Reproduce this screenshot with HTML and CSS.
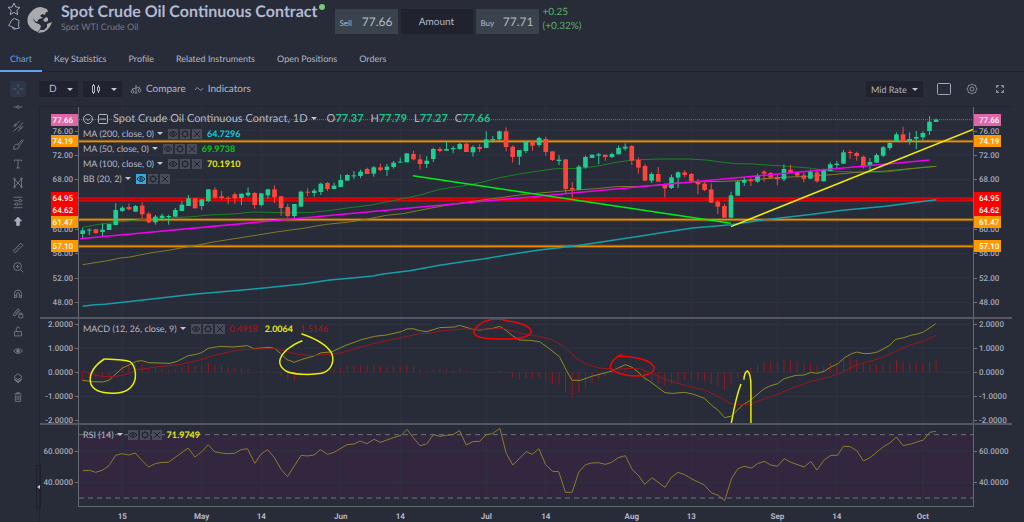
FILE: index.html
```
<!DOCTYPE html>
<html lang="en">
  <head>
    <meta charset="UTF-8" />
    <meta name="viewport" content="width=device-width, initial-scale=1.0" />
    <title>Spot Crude Oil Continuous Contract</title>
    <link rel="stylesheet" href="styles.css">
  </head>
  <body>
    <!-- Icons shared by the legend rows -->
    <svg class="sprite" aria-hidden="true">
      <symbol id="i-eye" viewBox="0 0 10 10">
        <path d="M1 5Q5 0 9 5Q5 10 1 5Z" /><circle cx="5" cy="5" r="1.2" />
      </symbol>
      <symbol id="i-gear" viewBox="0 0 10 10">
        <circle cx="5" cy="5" r="2.6" />
        <path d="M5 1v1.4M5 7.6V9M1 5h1.4M7.6 5H9M2.2 2.2l1 1M6.8 6.8l1 1M2.2 7.8l1-1M6.8 3.2l1-1" />
      </symbol>
      <symbol id="i-close" viewBox="0 0 10 10">
        <path d="M2 2l6 6M8 2l-6 6" />
      </symbol>
    </svg>

    <!-- Header -->
    <header class="header">
      <div class="marks">
        <button class="icon-btn" aria-label="Favourite">
          <svg width="14" height="14" viewBox="0 0 14 14"><path d="M7 1l1.800 4 4.200.4-3.200 2.900 1 4.300L7 10.400l-3.800 2.200 1-4.300L1 5.400l4.200-.4z" /></svg>
        </button>
        <button class="icon-btn" aria-label="Alert">
          <svg width="14" height="14" viewBox="0 0 14 14"><path d="M7.500 1.500L12 3.500l-.5 6 1 1.500-3.500.8-7.500-3.500C3.500 7.500 3 3 7.500 1.500zM5.500 10.500q.5 2.500 3 1.500" /></svg>
        </button>
      </div>
      <svg class="globe" width="26" height="26" viewBox="0 0 26 26">
        <path d="M4 5Q8 0 14 0L20 2L21 5L19 5L18 8L16 7L14 8L13 9L16 11L12 12L10 15L8 14L6 11L7 14L9 16L12 17L14 19L13 22L11 25Q4 23 1 17Q-1 10 4 5Z" />
        <path d="M16 13L19 10L21 11L21 14L18 15Z" />
        <path d="M20 17L25 15Q23 22 17 25L11 26L13 23L17 23L20 20Z" />
      </svg>
      <div class="names">
        <h1>Spot Crude Oil Continuous Contract<span class="live"></span></h1>
        <p>Spot WTI Crude Oil</p>
      </div>
      <div class="deal">
        <button class="rate"><small>Sell</small>77.66</button>
        <input class="amount" type="text" placeholder="Amount" aria-label="Amount" />
        <button class="rate"><small>Buy</small>77.71</button>
      </div>
      <div class="change">+0.25<br />(+0.32%)</div>
    </header>

    <nav class="tabs">
      <a href="#" class="active">Chart</a>
      <a href="#">Key Statistics</a>
      <a href="#">Profile</a>
      <a href="#">Related Instruments</a>
      <a href="#">Open Positions</a>
      <a href="#">Orders</a>
    </nav>

    <div class="workspace">
      <!-- Drawing tools -->
      <aside class="tools">
        <button class="tool selected" aria-label="Crosshair"><svg viewBox="0 0 16 16"><path d="M8 2v4M8 10v4M2 8h4M10 8h4" /></svg></button>
        <div class="tool-group">
          <button class="tool" aria-label="Horizontal line"><svg viewBox="0 0 16 16"><path d="M3 8h3M10 8h3" /><circle cx="8" cy="8" r="1.500" /></svg></button>
          <button class="tool" aria-label="Channel"><svg viewBox="0 0 16 16"><path d="M3 9l7-7M3 14L14 4M8 14l6-6" /><circle cx="5" cy="7" r="1" /><circle cx="11" cy="10" r="1" /></svg></button>
          <button class="tool" aria-label="Brush"><svg viewBox="0 0 16 16"><path d="M3 13q0-6 4-6 4 1 2 4-2 2-6 2zM8 7l5-5 1 1-4 5" /></svg></button>
          <button class="tool" aria-label="Text"><svg viewBox="0 0 16 16"><path d="M4 5V3.500h8V5M8 3.500v9M6 12.500h4" /></svg></button>
          <button class="tool" aria-label="Pattern"><svg viewBox="0 0 16 16"><path d="M4 12V4l4 4 4-5v9L8 8z" /><circle cx="4" cy="3.500" r="1" /><circle cx="12" cy="3" r="1" /><circle cx="4" cy="12.500" r="1" /><circle cx="12" cy="12.500" r="1" /></svg></button>
          <button class="tool" aria-label="Levels"><svg viewBox="0 0 16 16"><path d="M3 2.500h10M3 6.500h6M12 6.500h1M3 10.500h2M8 10.500h5M3 14.500h10" /><circle cx="10.500" cy="6.500" r="1.500" /><circle cx="6.500" cy="10.500" r="1.500" /></svg></button>
          <button class="tool solid" aria-label="Arrow"><svg viewBox="0 0 16 16"><path d="M8 3.500l4 4.500H9.500v5h-3V8H4z" /></svg></button>
        </div>
        <div class="tool-group">
          <button class="tool" aria-label="Measure"><svg viewBox="0 0 16 16"><path d="M2.500 11L11 2.500 13.500 5 5 13.500zM5 10l1 1M7 8l1 1M9 6l1 1" /></svg></button>
          <button class="tool" aria-label="Zoom in"><svg viewBox="0 0 16 16"><circle cx="7.500" cy="7.500" r="4.500" /><path d="M11 11l3 3M5.500 7.500h4M7.500 5.500v4" /></svg></button>
        </div>
        <div class="tool-group">
          <button class="tool" aria-label="Magnet"><svg viewBox="0 0 16 16"><path d="M4 12V7.500a4 4 0 018 0V12H9.500V8a1.500 1.500 0 00-3 0v4zM4 10h2.500M9.500 10H12" /></svg></button>
          <button class="tool" aria-label="Lock drawing"><svg viewBox="0 0 16 16"><path d="M3 9l5-6 2 2-5 6H3zM5 9l4-4" /><path d="M9 9.500h4.500v4H9zM10 9.500V8h2.500v1.500" /></svg></button>
          <button class="tool" aria-label="Unlock all"><svg viewBox="0 0 16 16"><path d="M4 7.500h8v5H4zM6 7.500V5a2 2 0 014-1M8 9.500v1" /></svg></button>
          <button class="tool" aria-label="Show drawings"><svg viewBox="0 0 16 16"><path d="M3 8Q8 2.500 13 8 8 13.500 3 8z" /><circle class="dot" cx="8" cy="8" r="1.500" /></svg></button>
        </div>
        <div class="tool-group">
          <button class="tool" aria-label="Layers"><svg viewBox="0 0 16 16"><path d="M8 3l4.500 3.500L8 10 3.500 6.500z" /><path class="dot" d="M4 9l4 3 4-3v1l-4 3.500L4 10z" /></svg></button>
          <button class="tool" aria-label="Delete"><svg viewBox="0 0 16 16"><path d="M4 4.500h8M6.500 4.500V3h3v1.500M5 6v7h6V6M7 6.500v5M9 6.500v5" /></svg></button>
        </div>
      </aside>

      <main class="main">
        <div class="toolbar">
          <span class="picker"><select aria-label="Interval"><option>D</option></select></span>
          <button class="picker chart-type" aria-label="Chart type">
            <svg width="10" height="12" viewBox="0 0 10 12"><path d="M1.500 2.500h2v7h-2zM2.500 1v1.500M2.500 9.500V11M6.500 4h2v4h-2zM7.500 2v2M7.500 8v2" /></svg>
          </button>
          <button class="action">
            <svg width="12" height="10" viewBox="0 0 12 10"><path d="M6 1v8M2 5l8-2M1 8q1.500 2 3 0L2.500 5zM8 7q1.500 2 3 0L9.500 4zM4.500 9h3" /></svg>Compare
          </button>
          <button class="action">
            <svg width="10" height="10" viewBox="0 0 10 10"><path d="M1 6q2-4 4-1t4-1" /></svg>Indicators
          </button>
          <div class="toolbar-end">
            <span class="picker"><select aria-label="Rate"><option>Mid Rate</option></select></span>
            <button class="icon-btn" aria-label="Layout"><svg width="14" height="14" viewBox="0 0 14 14"><rect x="0.500" y="1.500" width="13" height="11" rx="1" /></svg></button>
            <button class="icon-btn dim" aria-label="Settings"><svg width="14" height="14" viewBox="0 0 14 14"><path d="M5.500 3L7 2l1.500 1 2 .3.5 2L12 7l-1 1.700-.5 2-2 .3L7 12l-1.500-1-2-.3-.5-2L2 7l1-1.700.5-2z" /><circle cx="7" cy="7" r="2" /></svg></button>
            <button class="icon-btn dim" aria-label="Full screen"><svg width="14" height="14" viewBox="0 0 14 14"><path d="M3.500 6V3.500H6M3.500 3.500l2 2M8 3.500h2.500V6M10.500 3.500l-2 2M3.500 8v2.500H6M3.500 10.500l2-2M10.500 8v2.500H8M10.500 10.500l-2-2" /></svg></button>
          </div>
        </div>

        <div class="chart">
          <!-- Price -->
          <section class="pane price-pane">
            <svg class="axis" data-pane="price" data-side="left"></svg>
            <div class="plot">
              <svg id="price" viewBox="0 21 2685 630" preserveAspectRatio="none"></svg>
              <div class="legend">
                <div class="row title">
                  <svg width="10" height="10" viewBox="0 0 10 10"><circle cx="5" cy="5" r="4.500" /><path d="M3 4.500l2 2 2-2" /></svg>
                  <svg width="10" height="10" viewBox="0 0 10 10"><rect x="0.500" y="0.500" width="9" height="9" rx="1" /><path d="M2 5h6" /></svg>
                  <span class="caret">Spot Crude Oil Continuous Contract, 1D</span>
                  <span class="ohlc">O<b>77.37</b></span>
                  <span class="ohlc">H<b>77.79</b></span>
                  <span class="ohlc">L<b>77.27</b></span>
                  <span class="ohlc">C<b>77.66</b></span>
                </div>
                <div class="row" data-study><span class="caret">MA (200, close, 0)</span><b class="cyan">64.7296</b></div>
                <div class="row" data-study><span class="caret">MA (50, close, 0)</span><b class="green">69.9738</b></div>
                <div class="row" data-study><span class="caret">MA (100, close, 0)</span><b class="yellow">70.1910</b></div>
                <div class="row hidden-study" data-study><span class="caret">BB (20, 2)</span></div>
              </div>
            </div>
            <svg class="axis" data-pane="price" data-side="right"></svg>
          </section>

          <!-- MACD -->
          <section class="pane macd-pane">
            <svg class="axis" data-pane="macd" data-side="left"></svg>
            <div class="plot">
              <svg id="macd" viewBox="0 27 2685 312" preserveAspectRatio="none"></svg>
              <div class="legend">
                <div class="row" data-study><span class="caret">MACD (12, 26, close, 9)</span><span class="red">0.4918</span><b class="yellow">2.0064</b><span class="red">1.5146</span></div>
              </div>
            </div>
            <svg class="axis" data-pane="macd" data-side="right"></svg>
          </section>

          <!-- RSI -->
          <section class="pane rsi-pane">
            <svg class="axis" data-pane="rsi" data-side="left"></svg>
            <div class="plot">
              <svg id="rsi" viewBox="0 345 2685 243" preserveAspectRatio="none"></svg>
              <div class="legend">
                <div class="row" data-study><span class="caret">RSI (14)</span><b class="yellow">71.9749</b></div>
              </div>
            </div>
            <svg class="axis" data-pane="rsi" data-side="right"></svg>
          </section>

          <div class="time-axis"><div id="dates"></div></div>
          <button class="collapse" aria-label="Collapse panel"></button>
        </div>
      </main>
    </div>

    <script src="chart.js"></script>
  </body>
</html>
```

FILE: styles.css
```
* {
  box-sizing: border-box;
  margin: 0;
  padding: 0;
}

body {
  font-family: Lato, "Open Sans", sans-serif;
  font-size: 10px;
  text-rendering: geometricPrecision;
  background-color: #282b38;
  color: #b4b8c6;
  min-height: 100vh;
  overflow-x: hidden;
}

button,
input,
select {
  font: inherit;
  color: inherit;
  text-rendering: inherit;
  background: none;
  border: none;
  cursor: pointer;
}

svg {
  display: block;
  fill: none;
  stroke: currentColor;
}

.sprite {
  position: absolute;
  width: 0;
  height: 0;
}

/* Header */
.header {
  display: flex;
  align-items: flex-start;
  height: 46px;
  padding-left: 7px;
}

.marks {
  display: flex;
  flex-direction: column;
  gap: 1px;
  padding-top: 2px;
  margin-right: 6px;
}

.icon-btn {
  display: block;
  color: #a0a9bd;
}

.icon-btn.dim {
  color: #8a8d99;
}

.globe {
  margin-top: 7px;
  fill: #a9aaad;
  stroke: none;
}

.names {
  padding: 1px 0 0 8px;
}

h1 {
  display: flex;
  font-size: 16px;
  line-height: 22px;
  font-weight: 700;
  color: #b2b9d2;
}

.names p {
  font-size: 9px;
  line-height: 8px;
  color: #777a84;
}

.live {
  width: 6px;
  height: 6px;
  margin: 3px 0 0 1px;
  border-radius: 50%;
  background-color: #72c979;
}

.deal {
  display: flex;
  gap: 3px;
  margin: 9px 0 0 10px;
}

.rate {
  display: flex;
  align-items: baseline;
  justify-content: space-between;
  width: 63px;
  height: 25px;
  padding: 5px;
  background-color: #3a424b;
  font-size: 12px;
  line-height: 16px;
}

.rate small {
  font-size: 8px;
}

.amount {
  width: 72px;
  background-color: #20222e;
  text-align: center;
}

.amount::placeholder {
  color: #b4b8c6;
  opacity: 1;
}

.change {
  margin: 5px 0 0 4px;
  line-height: 14px;
  color: #58b368;
}

/* Tabs */
.tabs {
  display: flex;
  gap: 2px;
  height: 26px;
  border-bottom: 1px solid #1f212c;
  font-size: 9px;
}

.tabs a {
  padding: 5px 10px;
  height: 26px;
  line-height: 15px;
  color: inherit;
  text-decoration: none;
}

.tabs a.active {
  color: #5ea6ec;
  border-bottom: 2px solid #5ea6ec;
}

/* Left tools */
.workspace {
  display: flex;
}

.tools {
  width: 36px;
  padding: 9px 0 0 10px;
  display: flex;
  flex-direction: column;
  gap: 8px;
}

.tool {
  display: flex;
  align-items: center;
  width: 16px;
  height: 19px;
  color: #777b87;
}

.tool svg {
  width: 16px;
  height: 14px;
}

.tool.selected {
  height: 16px;
  margin-bottom: -8px;
  background-color: #303548;
  border-radius: 2px;
  color: #2f7488;
}

.tool.solid {
  color: #a7aebf;
}

.tool.solid svg,
.dot {
  fill: currentColor;
}

/* Toolbar */
.main {
  flex: 1;
  min-width: 0;
  padding: 0 12px 0 3px;
}

.toolbar {
  display: flex;
  align-items: center;
  height: 34px;
  gap: 5px;
}

.picker {
  display: flex;
  align-items: center;
  height: 16px;
  background-color: #20222e;
}

.picker select {
  appearance: none;
  padding: 0 5px 0 10px;
}

.toolbar-end .picker select {
  padding: 0 0 0 5px;
  font-size: 9px;
}

.chart-type {
  gap: 5px;
  padding-left: 8px;
}

.picker::after,
.caret::after {
  content: "";
  border: 3px solid transparent;
  border-top-color: #c3c7d2;
  border-bottom: 0;
}

.picker::after {
  margin: 0 5px;
}

.action {
  display: flex;
  align-items: center;
  gap: 4px;
  margin-left: 3px;
}

.action svg {
  color: #858996;
}

.toolbar-end {
  display: flex;
  align-items: center;
  gap: 14px;
  margin-left: auto;
  padding-right: 5px;
}

/* Chart */
.chart {
  position: relative;
  border-top: 1px solid #222430;
  border-left: 1px solid #222430;
}

.pane {
  display: grid;
  grid-template: 100% / 38px 1fr 38px;
}

.price-pane {
  height: 210px;
}

.macd-pane {
  height: 106px;
}

.rsi-pane {
  height: 84px;
}

.macd-pane,
.rsi-pane {
  border-top: 2px solid #555862;
}

.plot {
  position: relative;
  overflow: hidden;
  border: solid #666973;
  border-width: 0 1px;
}

.rsi-pane .plot {
  border-bottom: 1px solid #666973;
}

.plot > svg {
  width: 100%;
  height: 100%;
}

.plot > svg * {
  vector-effect: non-scaling-stroke;
}

.axis {
  width: 38px;
  height: 100%;
  overflow: visible;
  font-family: Roboto, Arial, sans-serif;
  font-size: 8px;
  font-weight: 500;
}

.axis text {
  fill: #a3a8b6;
  stroke: none;
}

.axis .tag {
  stroke: none;
}

.axis .tag-text {
  fill: #fff;
}

.axis line {
  stroke: #70737d;
}

.grid {
  stroke: #2f3241;
}

.up {
  stroke: #20cd91;
  fill: #20cd91;
}

.down {
  stroke: #ff443b;
  fill: #ff443b;
}

.body {
  stroke: none;
}

.last {
  stroke: #a05a86;
  stroke-dasharray: 1 1;
}

.halo {
  stroke-width: 3;
  opacity: 0.45;
}

.orange {
  stroke: #ff9800;
}

.level-red {
  stroke: #e60208;
  stroke-width: 2;
  opacity: 0.9;
}

.ma50 {
  stroke: #1c8126;
}

.ma100 {
  stroke: #7f7c2a;
}

.ma200 {
  stroke: #149fa8;
  stroke-width: 1.5;
}

.trend-pink {
  stroke: #f000f0;
  stroke-width: 1.5;
}

.trend-green {
  stroke: #00ee10;
  stroke-width: 1.5;
}

.trend-yellow,
.mark-yellow {
  stroke: #eeee05;
  stroke-width: 1.5;
}

.mark-red {
  stroke: #f00505;
  stroke-width: 1.5;
}

.macd-line {
  stroke: #8d8d26;
}

.signal-line,
.histogram {
  stroke: #991820;
}

.rsi-line {
  stroke: #8d7c2c;
}

.band {
  fill: #33263f;
  stroke: none;
}

.band-edge {
  stroke: #74707e;
  stroke-dasharray: 5 4;
}

/* Legends */
.legend {
  position: absolute;
  top: 4px;
  left: 4px;
  font-size: 9px;
}

.macd-pane .legend,
.rsi-pane .legend {
  top: 2px;
}

.row {
  display: flex;
  align-items: center;
  gap: 5px;
  height: 15px;
  line-height: 15px;
  white-space: nowrap;
}

.row.title {
  font-size: 11px;
}

.caret {
  display: flex;
  align-items: center;
  gap: 3px;
}

.title .caret {
  margin-right: 5px;
}

.ohlc {
  margin-right: 2px;
}

.ohlc b {
  color: #20c08c;
}

.row-tools {
  display: flex;
  gap: 2px;
}

.row-tools button {
  width: 10px;
  height: 10px;
  background-color: #484b58;
  color: #20232e;
}

.row-tools svg {
  width: 10px;
  height: 10px;
}

.hidden-study .row-tools button:first-child {
  background-color: #38a7dc;
}

.cyan {
  color: #09cfdc;
}

.green {
  color: #0fc41b;
}

.yellow {
  color: #e8e815;
}

.red {
  color: #ba1018;
  margin-right: 2px;
}

b + .red {
  margin-left: 2px;
}

/* Dates */
.time-axis {
  height: 15px;
  padding: 0 39px;
  font: 700 8px Roboto, Arial, sans-serif;
}

#dates {
  position: relative;
}

#dates span {
  position: absolute;
  top: 5px;
  transform: translateX(-50%);
}

.collapse {
  position: absolute;
  bottom: 14px;
  left: -4px;
  width: 5px;
  height: 43px;
  border: 1px solid #1d1f2a;
}

.collapse::after {
  content: "";
  display: block;
  border: 2px solid transparent;
  border-right: 3px solid #c3c7d2;
  border-left: 0;
}
```

FILE: chart.js
```
const STEP = 19.87;
const FIRST = 11;
const WIDTH = 2685;

// high, body top, body bottom, low, up
const candles = [
  [383,391,402,416,1],[385,389,392,405,1],[386,388,399,402,0],[370,389,396,408,1],[372,372,390,390,1],
  [310,330,375,376,1],[318,323,333,336,1],[310,321,328,331,0],[315,318,335,335,1],[306,317,343,355,0],
  [336,341,367,370,0],[345,350,367,374,1],[341,347,354,362,1],[344,348,350,374,1],[324,330,350,350,1],
  [303,314,333,333,1],[285,295,318,318,1],[295,295,325,325,0],[298,298,318,330,1],[268,268,303,307,1],
  [262,269,293,295,0],[273,289,294,300,0],[288,294,297,312,0],[278,283,295,312,0],[281,281,294,315,1],
  [262,278,286,291,1],[276,279,315,326,0],[280,280,315,320,1],[266,268,286,296,1],[256,268,292,309,0],
  [288,289,324,348,0],[312,321,348,353,0],[312,312,348,357,1],[272,275,320,320,1],[265,275,278,288,0],
  [266,272,279,290,1],[248,251,276,285,1],[246,249,267,273,0],[248,257,267,267,1],[224,240,261,261,1],
  [222,225,242,242,1],[213,226,228,237,1],[209,215,228,234,1],[203,207,222,222,0],[198,202,221,230,1],
  [191,202,210,214,0],[192,200,210,228,1],[183,188,201,206,1],[173,185,188,188,1],[160,160,187,187,1],
  [152,162,178,181,0],[163,178,192,208,0],[168,182,192,204,1],[143,147,177,186,1],[141,147,153,157,0],
  [125,147,152,152,1],[138,144,148,160,1],[128,132,147,149,1],[128,131,156,156,0],[136,141,157,170,1],
  [133,141,147,156,0],[94,118,144,144,1],[108,117,120,128,1],[92,94,118,125,1],[82,94,141,154,0],
  [136,140,171,188,0],[150,150,170,195,1],[123,126,153,160,1],[125,125,137,152,0],[110,114,135,140,1],
  [110,117,156,167,0],[154,154,180,183,0],[166,179,183,195,1],[177,178,267,280,0],[247,264,269,292,0],
  [195,200,270,270,1],[167,171,202,206,1],[164,164,174,174,1],[159,163,167,193,1],[164,164,171,182,0],
  [158,162,171,174,1],[137,144,163,163,1],[130,140,146,152,1],[135,138,182,195,0],[172,180,203,221,0],
  [191,198,242,242,0],[217,222,242,249,1],[201,222,245,245,0],[250,253,265,292,0],[224,232,264,267,1],
  [214,217,233,264,1],[211,217,225,232,0],[219,222,243,248,0],[237,243,253,283,0],[246,251,270,273,0],
  [250,268,308,308,0],[300,305,320,342,0],[311,318,353,353,0],[275,286,353,353,1],[243,245,287,287,1],
  [230,240,248,258,1],[233,240,244,258,0],[221,226,245,248,1],[210,215,221,245,0],[216,219,233,236,0],
  [221,231,238,256,0],[193,207,238,243,1],[194,209,219,219,0],[213,216,227,233,0],[217,226,236,247,0],
  [209,215,236,236,1],[209,217,244,248,0],[206,210,244,244,1],[187,193,213,213,1],[183,191,195,204,1],
  [150,157,191,191,1],[150,156,158,176,0],[155,159,168,182,0],[167,170,198,205,0],[174,186,195,210,1],
  [160,165,188,188,1],[138,142,167,171,1],[125,129,144,150,1],[97,103,124,124,1],[80,103,124,124,0],
  [97,117,124,134,1],[93,111,116,147,1],[94,99,112,122,1],[49,65,93,105,1],[56,59,66,66,1],
];

// shift a list of [x, y] points along the plot
const from = (dx, points) => points.map(([x, y]) => [x + dx, y]);

const ma50 = [
  ...from(-27, [[38,382],[80,374],[130,368],[200,360],[255,356],[370,350],[415,345],[490,342],[550,336],[640,338],[720,338],[800,329]]),
  ...from(813, [[0,323],[60,316],[155,297],[215,284],[270,268],[350,256],[400,246],[450,233],[510,222],[560,214],[620,206],[690,205],[740,199],[800,187],[850,180]]),
  ...from(1683, [[0,179],[60,177],[150,177],[200,180],[250,187],[290,191],[340,192],[430,198],[510,204],[570,213],[650,216],[740,216],[800,209],[850,202],[892,199]]),
];
const ma100 = [
  ...from(-27, [[38,494],[120,481],[150,474],[180,471],[240,459],[300,450],[380,436],[430,426],[520,412],[620,396],[700,385],[770,373]]),
  ...from(813, [[0,366],[60,356],[110,346],[160,341],[240,325],[300,314],[370,304],[430,296],[510,285],[570,279],[640,273],[740,266],[800,260]]),
  ...from(1683, [[0,259],[60,255],[120,248],[200,245],[260,244],[340,239],[430,232],[520,228],[580,224],[640,218],[740,213],[800,207],[892,199]]),
];
const ma200 = [
  ...from(-27, [[38,619],[75,614],[105,613],[200,602],[370,583],[520,570],[700,552],[780,540]]),
  ...from(813, [[0,535],[70,528],[100,522],[180,512],[270,496],[350,484],[400,477],[490,462],[570,450],[680,437],[750,427]]),
  ...from(1683, [[0,409],[95,394],[160,384],[275,374],[370,360],[520,343],[610,331],[740,319],[820,308],[892,299]]),
];
const macd = [
  ...from(-27, [[38,211],[70,215],[100,216],[118,210],[156,175],[200,154],[216,152],[236,158],[300,160],[322,154],[355,137],[380,133],[395,128],[415,115],[450,109],[490,111],[533,107],[552,116],[600,112],[615,116],[632,130],[652,149],[673,157],[700,147],[730,139],[755,128],[785,126],[830,105]]),
  ...from(813, [[0,102],[35,89],[75,79],[110,75],[155,65],[172,57],[190,56],[210,62],[232,65],[270,53],[315,51],[330,46],[370,58],[390,60],[430,55],[451,49],[470,62],[490,78],[510,90],[540,91],[570,95],[590,109],[630,140],[650,180],[668,211],[693,211],[730,198],[785,184],[828,164],[848,172],[866,186],[886,205]]),
  ...from(1713, [[0,213],[47,248],[70,250],[105,247],[130,252],[165,265],[187,286],[207,301],[226,323],[247,318],[280,285],[300,273],[320,257],[345,236],[365,227],[385,221],[405,206],[440,196],[465,195],[485,187],[503,190],[525,184],[545,171],[565,162],[585,144],[605,132],[623,126],[645,131],[665,130],[685,126],[720,107],[740,88],[765,83],[785,76],[805,72],[823,66],[860,41]]),
];
const signal = [
  ...from(-27, [[38,182],[70,194],[100,200],[140,199],[170,193],[200,180],[255,171],[330,164],[390,150],[440,134],[500,121],[550,117],[615,116],[640,122],[680,132],[720,137],[790,132],[820,127]]),
  ...from(813, [[0,121],[75,100],[155,83],[210,71],[240,70],[280,62],[340,57],[400,58],[460,55],[500,66],[540,76],[570,79],[610,90],[640,108],[680,144],[710,162],[750,174],[800,178],[830,175],[870,176]]),
  ...from(1713, [[0,187],[60,213],[120,229],[170,242],[200,256],[247,282],[300,283],[350,265],[385,253],[420,238],[485,214],[545,200],[580,186],[625,164],[690,146],[740,124],[785,104],[823,94],[860,77]]),
];
const rsi = [
  ...from(-27, [[38,482],[58,481],[77,487],[97,481],[117,467],[137,436],[156,431],[176,435],[196,429],[216,451],[236,471],[256,461],[276,457],[295,457],[355,414],[375,441],[396,425],[415,404],[434,425],[454,429],[474,431],[494,430],[514,419],[533,416],[555,460],[574,432],[593,419],[614,443],[634,478],[653,500],[694,436],[713,438],[733,435],[752,419],[773,433],[793,427],[832,404]]),
  ...from(813, [[13,402],[31,393],[52,401],[73,388],[92,397],[131,383],[155,376],[172,358],[190,382],[211,407],[231,402],[251,374],[271,379],[290,376],[310,374],[330,362],[350,405],[370,395],[390,394],[410,374],[429,371],[451,355],[470,430],[490,465],[530,425],[549,433],[568,416],[588,463],[609,484],[628,485],[648,547],[668,547],[688,486],[708,464],[727,459],[747,458],[768,463],[787,457],[806,443],[828,437],[848,478],[866,495],[886,523]]),
  ...from(1713, [[8,503],[47,532],[66,502],[86,487],[106,494],[128,507],[165,525],[187,549],[207,556],[226,572],[247,505],[266,476],[285,469],[307,474],[325,461],[345,454],[365,465],[385,469],[405,446],[425,457],[465,471],[485,454],[503,480],[525,450],[545,436],[565,436],[583,409],[603,410],[623,422],[643,453],[663,443],[703,410],[722,399],[742,381],[762,407],[785,402],[823,390],[842,367],[860,364]]),
];

const dates = [[6,"15"],[18,"May"],[27,"14"],[39,"Jun"],[48,"14"],[61,"Jul"],[70,"14"],[83,"Aug"],[92,"13"],[105,"Sep"],[114,"14"],[127,"Oct"]];

const scales = {
  price: {
    top: 21,
    // 64.00 always sits under the red tags, so it only gets its grid line
    labels: [[92,"76.00"],[165,"72.00"],[238,"68.00"],[312,""],[386,"60.00"],[460,"56.00"],[533,"52.00"],[607,"48.00"]],
    tags: [[59,"77.66","#e066a8"],[124,"74.19","#ff9800"],[295,"64.95","#ff0000"],[331,"64.62","#ff0000"],[367,"61.47","#ff9800"],[438,"57.10","#ff9800"]],
  },
  macd: {
    top: 27,
    labels: [[43,"2.0000"],[114,"1.0000"],[187,"0.0000"],[259,"-1.0000"],[331,"-2.0000"]],
    tags: [],
  },
  rsi: { top: 345, labels: [[422,"60.0000"],[517,"40.0000"]], tags: [] },
};

const xAt = (i) => FIRST + STEP * i;
const line = (x1, y1, x2, y2, cls) => `<line x1="${x1}" y1="${y1}" x2="${x2}" y2="${y2}" class="${cls}"/>`;
const poly = (points, cls) => `<polyline points="${points.join(" ")}" class="${cls}"/>`;
const level = (y, cls) => line(0, y, WIDTH, y, cls);

function grid(name) {
  const vertical = dates.map(([i]) => line(xAt(i), 0, xAt(i), 700, "grid"));
  const horizontal = scales[name].labels.map(([y]) => level(y, "grid"));
  return vertical.concat(horizontal).join("");
}

function valueAt(points, x) {
  const n = points.findIndex((p) => p[0] >= x);
  if (n < 1) return points[n === 0 ? 0 : points.length - 1][1];
  const [x1, y1] = points[n - 1];
  const [x2, y2] = points[n];
  return y1 + ((y2 - y1) * (x - x1)) / (x2 - x1);
}

function drawPrice() {
  let out = grid("price") + level(59, "last");
  [124, 359, 439].forEach((y) => (out += level(y, "orange halo") + level(y, "orange")));
  out += level(295, "level-red") + level(302, "level-red");
  out += poly(ma50, "ma50") + poly(ma100, "ma100") + poly(ma200, "ma200");
  candles.forEach(([high, top, bottom, low, up], i) => {
    const cls = up ? "up" : "down";
    out += line(xAt(i), high, xAt(i), low, cls);
    out += `<rect x="${xAt(i) - 7}" y="${top}" width="14" height="${Math.max(bottom - top, 3)}" class="${cls} body"/>`;
  });
  out += line(3, 416, 2555, 180, "trend-pink");
  out += line(1003, 227, 1958, 370, "trend-green");
  out += line(1958, 380, 2685, 88, "trend-yellow");
  document.getElementById("price").innerHTML = out;
}

function drawMacd() {
  let out = grid("macd");
  candles.forEach((c, i) => {
    const x = xAt(i);
    out += line(x, 187, x, 187 + valueAt(macd, x) - valueAt(signal, x), "histogram");
  });
  out += poly(macd, "macd-line") + poly(signal, "signal-line");
  out += `<g transform="translate(-27 0)">
    <path class="mark-yellow" d="M103 147C130 148 165 149 180 155C195 165 198 190 196 205C190 235 165 249 130 250C95 250 65 240 61 215C58 185 75 165 103 147"/>
    <path class="mark-yellow" d="M695 71C730 83 770 100 786 130C795 155 785 182 755 190C720 196 670 194 648 183C622 165 625 145 650 120C665 108 680 98 698 92"/>
  </g>
  <g transform="translate(813 0)">
    <path class="mark-red" d="M430 28C400 32 375 50 373 68C378 82 400 86 450 87C500 88 535 85 545 68C548 50 510 36 475 33C460 28 445 26 430 28"/>
    <path class="mark-red" d="M817 133C800 140 782 155 783 175C800 195 850 199 870 198C900 195 915 188 914 172C905 150 870 142 808 138"/>
  </g>
  <path class="mark-yellow" transform="translate(1713 0)" d="M246 340C255 290 262 255 275 222M284 209C284 200 288 183 295 183C303 190 305 205 305 230V340"/>`;
  document.getElementById("macd").innerHTML = out;
}

function drawRsi() {
  document.getElementById("rsi").innerHTML =
    `<rect x="0" y="374" width="${WIDTH}" height="190" class="band"/>` +
    grid("rsi") + level(374, "band-edge") + level(564, "band-edge") + poly(rsi, "rsi-line");
}

function drawAxes() {
  document.querySelectorAll(".axis").forEach((axis) => {
    const { top, labels, tags } = scales[axis.dataset.pane];
    const left = axis.dataset.side === "left";
    const x = left ? 33 : 5;
    const anchor = left ? "end" : "start";
    const tick = left ? 35 : 0;
    let out = "";
    labels.forEach(([pos, text]) => {
      const y = Math.round((pos - top) / 3);
      out += line(tick, y + 0.5, tick + 3, y + 0.5, "");
      if (text) out += `<text x="${x}" y="${y + 3}" text-anchor="${anchor}">${text}</text>`;
    });
    tags.forEach(([pos, text, color]) => {
      const y = Math.round((pos - top) / 3);
      out += `<rect class="tag" x="${left ? 11 : 0}" y="${y - 6}" width="27" height="12" fill="${color}"/>`;
      out += `<text class="tag-text" x="${x}" y="${y + 3}" text-anchor="${anchor}">${text}</text>`;
    });
    axis.innerHTML = out;
  });
}

function drawDates() {
  document.getElementById("dates").innerHTML = dates
    .map(([i, text]) => `<span style="left: ${(xAt(i) / WIDTH) * 100}%">${text}</span>`)
    .join("");
}

function addStudyTools() {
  const icon = (name, label) => `<button aria-label="${label}"><svg><use href="#i-${name}"/></svg></button>`;
  document.querySelectorAll("[data-study] .caret").forEach((label) => {
    label.insertAdjacentHTML(
      "afterend",
      `<span class="row-tools">${icon("eye", "Hide")}${icon("gear", "Settings")}${icon("close", "Remove")}</span>`
    );
  });
}

drawPrice();
drawMacd();
drawRsi();
drawAxes();
drawDates();
addStudyTools();
```
